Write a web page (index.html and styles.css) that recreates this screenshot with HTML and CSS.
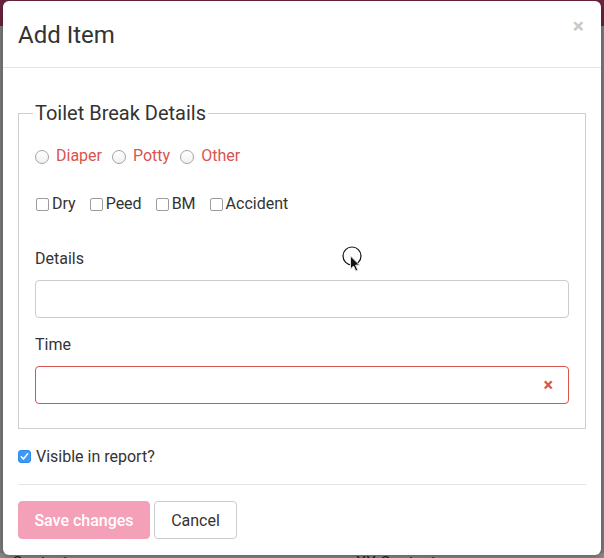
FILE: index.html
```html
<!DOCTYPE html>
<html>
<head>
<meta charset="utf-8">
<link rel="stylesheet" href="styles.css">
</head>
<body>
<div class="appbar"></div>
<div class="backdrop-table"><span class="bt-text">Contacts</span><span class="bt-text bt-right">XX Contacts</span></div>
<div class="modal">
  <div class="modal-header">
    <h4 class="modal-title">Add Item</h4>
    <span class="close">×</span>
  </div>
  <div class="modal-body">
    <fieldset class="fs">
      <legend>Toilet Break Details</legend>
      <div class="row radios">
        <label class="opt opt-radio"><span class="radio"></span>Diaper</label>
        <label class="opt opt-radio"><span class="radio"></span>Potty</label>
        <label class="opt opt-radio"><span class="radio"></span>Other</label>
      </div>
      <div class="row checks">
        <label class="opt opt-check"><span class="check"></span>Dry</label>
        <label class="opt opt-check"><span class="check"></span>Peed</label>
        <label class="opt opt-check"><span class="check"></span>BM</label>
        <label class="opt opt-check"><span class="check"></span>Accident</label>
      </div>
      <div class="field-label first">Details</div>
      <div class="input"></div>
      <div class="field-label">Time</div>
      <div class="input input-error"><span class="clear">×</span></div>
    </fieldset>
    <label class="visible-row"><span class="check checked"><svg width="11" height="11" viewBox="0 0 11 11"><path d="M2.3 5.8 L4.4 8 L8.7 2.8" fill="none" stroke="#fff" stroke-width="1.5" stroke-linecap="round" stroke-linejoin="round"/></svg></span>Visible in report?</label>
  </div>
  <div class="modal-footer">
    <button class="btn btn-save">Save changes</button>
    <button class="btn btn-cancel">Cancel</button>
  </div>
  <svg class="cursor" width="24" height="30" viewBox="0 0 24 30">
    <circle cx="10" cy="11" r="9" fill="none" stroke="#111" stroke-width="1.2"/>
    <path d="M8.5 11 L8.5 24 L11.5 21 L13.8 26 L15.8 25 L13.6 20.2 L17.5 20 Z" fill="#111" stroke="#ddd" stroke-width="1"/>
  </svg>
</div>
</body>
</html>
```
FILE: styles.css
```css
html, body {
  margin: 0;
  padding: 0;
}
body {
  width: 604px;
  height: 558px;
  background: #7b7b7b;
  font-family: Roboto, "Liberation Sans", Arial, sans-serif;
  color: #333;
  position: relative;
  overflow: hidden;
}
.appbar {
  height: 26px;
  background: #6b2340;
}
.backdrop-table {
  position: absolute;
  left: 0;
  right: 0;
  top: 553px;
  height: 10px;
  background: #8a8a8a;
  font-size: 16px;
  line-height: 20px;
}
.bt-text {
  position: absolute;
  left: 12px;
  top: 0;
  color: #222;
}
.bt-right {
  left: 356px;
}
.modal {
  position: absolute;
  top: 1px;
  left: 3px;
  width: 598px;
  height: 554px;
  background: #fff;
  border-radius: 6px;
  box-shadow: 0 2px 6px rgba(0, 0, 0, 0.3);
  box-sizing: border-box;
}
.modal-header {
  height: 67px;
  box-sizing: border-box;
  border-bottom: 1px solid #e5e5e5;
  padding: 0 15px;
  display: flex;
  align-items: center;
  justify-content: space-between;
}
.modal-title {
  margin: 0;
  font-size: 24px;
  font-weight: 400;
  line-height: 30px;
  color: #333;
  padding-top: 1px;
}
.close {
  font-size: 21px;
  font-weight: 700;
  color: #c9c9c9;
  line-height: 20px;
  align-self: flex-start;
  margin-top: 15px;
  margin-right: 2px;
}
.modal-body {
  padding: 15px 15px 16px;
}
.fs {
  margin: 18px 0 0;
  padding: 0 16px 24px;
  border: 1px solid #cfcfcf;
  min-width: 0;
}
.fs legend {
  font-size: 20px;
  line-height: 24px;
  padding: 0 2px;
  margin-left: -2px;
  color: #333;
}
.row {
  display: flex;
  align-items: center;
  height: 24px;
  font-size: 16px;
}
.radios {
  margin-top: 19px;
  gap: 10px;
}
.checks {
  margin-top: 24px;
  gap: 13px;
}
.opt {
  display: flex;
  align-items: center;
  line-height: 24px;
}
.opt-radio {
  color: #d9534f;
}
.radio {
  width: 14px;
  height: 14px;
  box-sizing: border-box;
  border: 1px solid #a3a3a3;
  border-radius: 50%;
  background: linear-gradient(#fff, #f1f1f1);
  margin-right: 7px;
  margin-top: 1px;
}
.check {
  width: 13px;
  height: 13px;
  box-sizing: border-box;
  border: 1px solid #9c9c9c;
  border-radius: 2px;
  background: #fff;
  margin-left: 1px;
  margin-right: 3px;
  margin-top: 1px;
  display: inline-flex;
  align-items: center;
  justify-content: center;
}
.checked {
  background: #3b99fc;
  border-color: #2f8ae8;
  border-radius: 3px;
  margin-left: 0;
  margin-right: 5px;
}
.field-label {
  font-size: 16px;
  line-height: 24px;
  margin-top: 15px;
  margin-bottom: 9px;
}
.field-label.first {
  margin-top: 31px;
}
.input {
  height: 38px;
  box-sizing: border-box;
  border: 1px solid #cccccc;
  border-radius: 4px;
  display: flex;
  align-items: center;
  justify-content: flex-end;
  padding-right: 15px;
}
.input-error {
  border-color: #d9534f;
}
.clear {
  color: #d9534f;
  font-size: 18px;
  font-weight: 700;
  line-height: 18px;
}
.visible-row {
  display: flex;
  align-items: center;
  height: 24px;
  margin-top: 15px;
  font-size: 16px;
}
.modal-footer {
  margin: 0 15px;
  border-top: 1px solid #e5e5e5;
  padding: 16px 0;
  display: flex;
  gap: 4px;
}
.btn {
  height: 38px;
  box-sizing: border-box;
  font-family: Roboto, "Liberation Sans", Arial, sans-serif;
  font-size: 16px;
  border-radius: 4px;
  padding: 0 12px;
  margin: 0;
  white-space: nowrap;
}
.btn-save {
  background: #f4a0b8;
  border: 1px solid #f4a0b8;
  color: #fff;
  font-weight: 500;
  width: 132px;
}
.btn-cancel {
  background: #fff;
  border: 1px solid #cccccc;
  color: #333;
  width: 83px;
}
.cursor {
  position: absolute;
  left: 339px;
  top: 244px;
}
```
